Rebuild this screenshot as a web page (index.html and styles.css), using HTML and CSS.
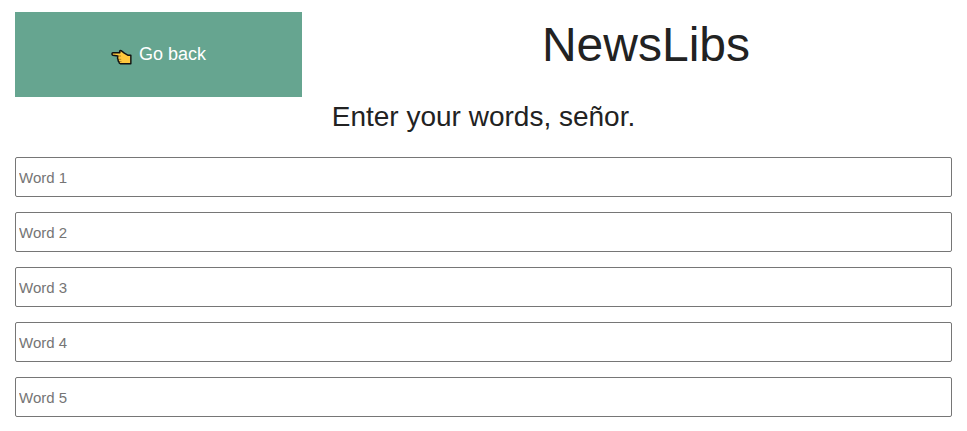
FILE: index.html
```html
<!DOCTYPE html>
<html lang="en">
<head>
<meta charset="utf-8">
<meta name="viewport" content="width=device-width, initial-scale=1">
<title>NewsLibs</title>
<link rel="stylesheet" href="styles.css">
</head>
<body>
<main class="page">
  <header class="top">
    <a class="back" href="#">
      <svg class="hand" viewBox="0 0 22 16" aria-hidden="true">
        <path d="M2 3.5H9.3L9 2.2Q9.3 1 10.6 1.3L14 4L18 6.2H20.8V15H10Q8.2 14.7 8.5 13Q7 12.3 7.6 10.7Q6.5 9.8 7 8.3L7.2 7L2 6.2Q.8 5.8 1 4.6Q1.1 3.7 2 3.5Z" fill="#ffc83d" stroke="#111" stroke-width="1.5" stroke-linejoin="round"/>
        <path d="M7.2 7H10.5M7.8 10.4H10.7M8.6 12.8H11" fill="none" stroke="#8b611e" stroke-width=".7"/>
      </svg>
      <span>Go back</span>
    </a>
    <h1 class="title">NewsLibs</h1>
  </header>
  <h2 class="subtitle">Enter your words, señor.</h2>
  <form class="words">
    <input class="word" type="text" placeholder="Word 1" aria-label="Word 1">
    <input class="word" type="text" placeholder="Word 2" aria-label="Word 2">
    <input class="word" type="text" placeholder="Word 3" aria-label="Word 3">
    <input class="word" type="text" placeholder="Word 4" aria-label="Word 4">
    <input class="word" type="text" placeholder="Word 5" aria-label="Word 5">
  </form>
</main>
</body>
</html>
```
FILE: styles.css
```css
* {
  box-sizing: border-box;
}

body {
  margin: 0;
  background: #fff;
  color: #222;
  font-family: "Liberation Sans", Arial, sans-serif;
}

.page {
  padding: 12px 15px 14px;
}

.top {
  display: grid;
  grid-template-columns: 287fr 612fr;
  column-gap: 38px;
  align-items: start;
}

.back {
  display: flex;
  align-items: center;
  justify-content: center;
  gap: 7px;
  padding: 32px 0;
  background: #66a590;
  color: #fff;
  font-size: 18px;
  line-height: 21px;
  text-decoration: none;
}

.hand {
  width: 21px;
  height: 16px;
  margin-top: 4px;
}

.title {
  margin: 0;
  font-size: 48px;
  font-weight: 400;
  line-height: 66px;
  text-align: center;
}

.subtitle {
  margin: 0 0 20px;
  font-size: 28px;
  font-weight: 400;
  line-height: 40px;
  text-align: center;
}

.words {
  display: grid;
  gap: 15px;
}

.word {
  width: 100%;
  height: 40px;
  padding: 2px 3px;
  border: 1px solid #767676;
  border-radius: 2px;
  background: #fff;
  color: #222;
  font: inherit;
  font-size: 15px;
}

.word::placeholder {
  color: #757575;
}
```
